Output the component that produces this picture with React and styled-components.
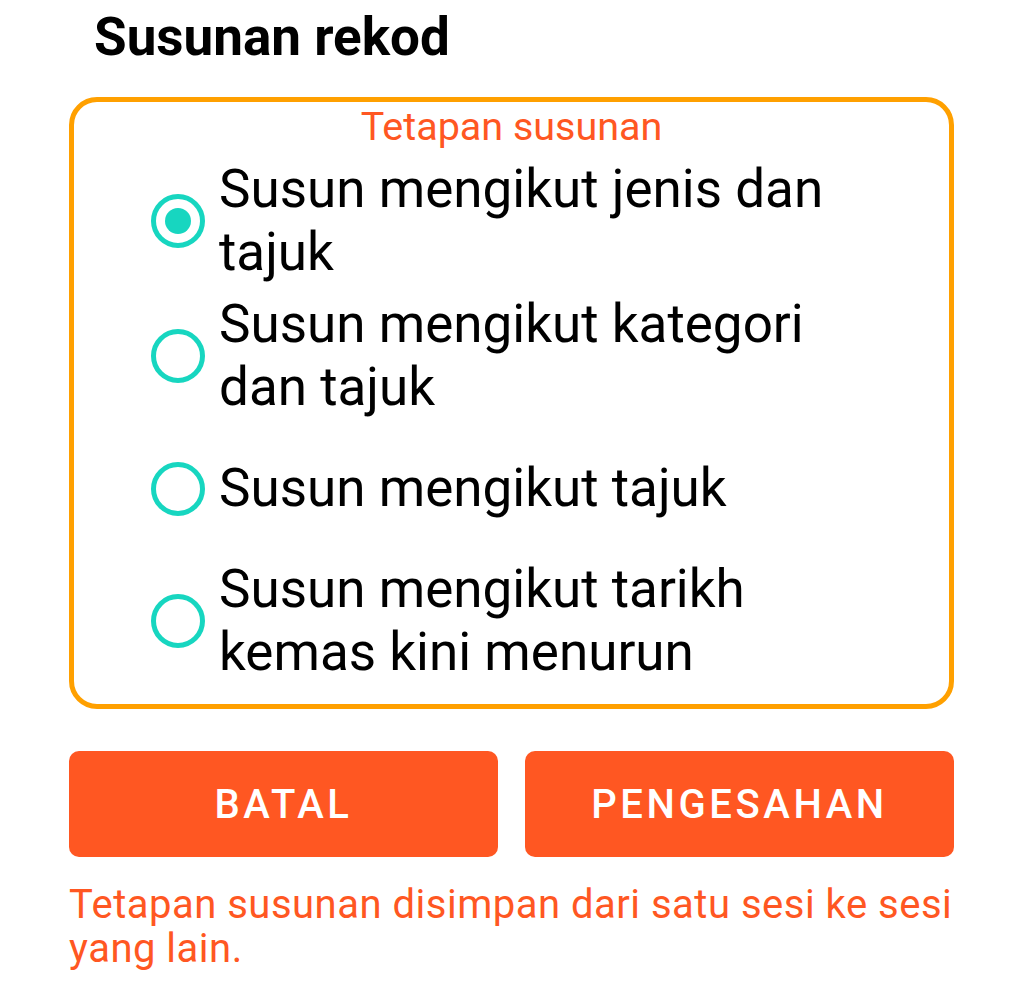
import React, { useState } from "react";
import styled, { createGlobalStyle } from "styled-components";

const GlobalStyle = createGlobalStyle`
  body {
    margin: 0;
    background: #ffffff;
    font-family: Roboto, "Noto Sans", sans-serif;
  }
`;

const options = [
  "Susun mengikut jenis dan tajuk",
  "Susun mengikut kategori dan tajuk",
  "Susun mengikut tajuk",
  "Susun mengikut tarikh kemas kini menurun",
];

//sort order dialog
const App = () => {
  const [selected, setSelected] = useState(0);

  return (
    <Page>
      <GlobalStyle />
      <Title>Susunan rekod</Title>
      <Box>
        <Legend>Tetapan susunan</Legend>
        <OptionList>
          {options.map((label, i) => (
            <Option key={label} onClick={() => setSelected(i)}>
              <Radio checked={selected === i} />
              <OptionLabel>{label}</OptionLabel>
            </Option>
          ))}
        </OptionList>
      </Box>
      <Buttons>
        <Button>BATAL</Button>
        <Button>PENGESAHAN</Button>
      </Buttons>
      <Note>Tetapan susunan disimpan dari satu sesi ke sesi yang lain.</Note>
    </Page>
  );
};

const Page = styled.div`
  padding: 6px 70px 0 69px;
  display: flex;
  flex-direction: column;
`;
const Title = styled.h1`
  margin: 0 0 29px 25px;
  font-size: 53px;
  line-height: 62px;
  font-weight: 700;
  color: #000;
`;
const Box = styled.div`
  border: 5px solid #ffa000;
  border-radius: 28px;
  padding: 3px 80px 20px 77px;
  display: flex;
  flex-direction: column;
`;
const Legend = styled.div`
  text-align: center;
  margin-left: -77px;
  margin-right: -80px;
  font-size: 39.5px;
  line-height: 44px;
  color: #ff5722;
`;
const OptionList = styled.div`
  margin-top: 9px;
  display: flex;
  flex-direction: column;
  gap: 9px;
`;
const Option = styled.div`
  display: flex;
  align-items: center;
  min-height: 121px;
  cursor: pointer;
`;
const Radio = styled.span`
  flex: none;
  box-sizing: border-box;
  width: 54px;
  height: 54px;
  margin-right: 14px;
  border: 5px solid #17d6c0;
  border-radius: 50%;
  position: relative;
  &::after {
    content: "";
    display: ${(p) => (p.checked ? "block" : "none")};
    position: absolute;
    left: 50%;
    top: 50%;
    width: 26px;
    height: 26px;
    margin: -13px 0 0 -13px;
    border-radius: 50%;
    background: #17d6c0;
  }
`;
const OptionLabel = styled.span`
  font-size: 53px;
  line-height: 63px;
  color: #000;
`;
const Buttons = styled.div`
  margin-top: 42px;
  display: grid;
  grid-template-columns: 1fr 1fr;
  gap: 27px;
`;
const Button = styled.button`
  height: 106px;
  border: none;
  border-radius: 10px;
  background: #ff5722;
  color: #fff;
  font-family: Roboto, sans-serif;
  font-size: 40px;
  font-weight: 500;
  letter-spacing: 3.6px;
  cursor: pointer;
`;
const Note = styled.p`
  margin: 26px 0 0;
  font-size: 40px;
  letter-spacing: 0.5px;
  line-height: 44px;
  color: #ff5722;
`;

export default App;
